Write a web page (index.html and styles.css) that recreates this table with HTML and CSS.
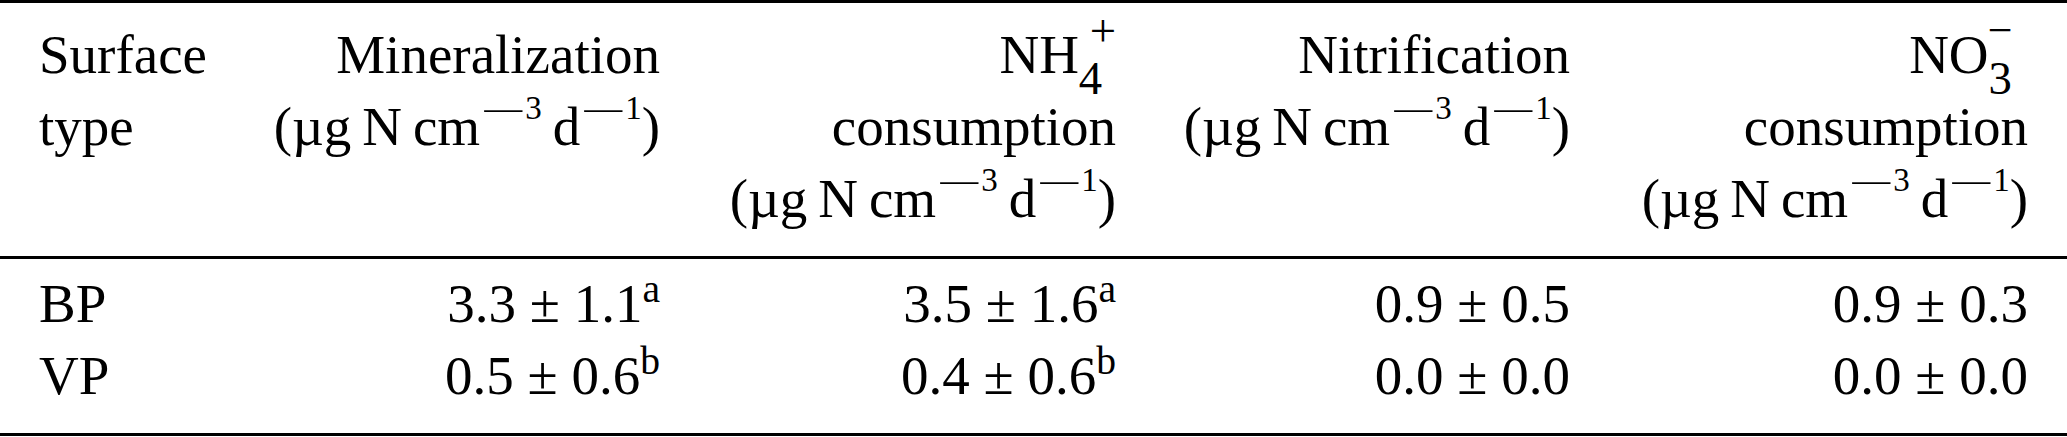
FILE: index.html
```html
<!DOCTYPE html>
<html lang="en">
<head>
    <meta charset="UTF-8">
    <title>Nitrogen transformation rates</title>
    <link rel="stylesheet" href="styles.css">
</head>
<body>
    <table class="rates">
        <colgroup>
            <col class="col-type">
            <col class="col-min">
            <col class="col-nh4">
            <col class="col-nit">
            <col class="col-no3">
        </colgroup>
        <thead>
            <tr>
                <th class="left">Surface<br>type</th>
                <th>Mineralization<br><span class="unit">(µg&#8201;N&#8201;cm<sup class="pow"><span class="neg">−</span>3</sup>&#8201;d<sup class="pow"><span class="neg">−</span>1</sup>)</span></th>
                <th>NH<sub class="idx">4</sub><sup class="chg">+</sup><br>consumption<br><span class="unit">(µg&#8201;N&#8201;cm<sup class="pow"><span class="neg">−</span>3</sup>&#8201;d<sup class="pow"><span class="neg">−</span>1</sup>)</span></th>
                <th>Nitrification<br><span class="unit">(µg&#8201;N&#8201;cm<sup class="pow"><span class="neg">−</span>3</sup>&#8201;d<sup class="pow"><span class="neg">−</span>1</sup>)</span></th>
                <th>NO<sub class="idx">3</sub><sup class="chg minus">−</sup><br>consumption<br><span class="unit">(µg&#8201;N&#8201;cm<sup class="pow"><span class="neg">−</span>3</sup>&#8201;d<sup class="pow"><span class="neg">−</span>1</sup>)</span></th>
            </tr>
        </thead>
        <tbody>
            <tr class="first">
                <td class="left">BP</td>
                <td>3.3 ± 1.1<sup class="note">a</sup></td>
                <td>3.5 ± 1.6<sup class="note">a</sup></td>
                <td>0.9 ± 0.5</td>
                <td>0.9 ± 0.3</td>
            </tr>
            <tr class="last">
                <td class="left">VP</td>
                <td>0.5 ± 0.6<sup class="note">b</sup></td>
                <td>0.4 ± 0.6<sup class="note">b</sup></td>
                <td>0.0 ± 0.0</td>
                <td>0.0 ± 0.0</td>
            </tr>
        </tbody>
    </table>
</body>
</html>
```

FILE: styles.css
```css
body {
    margin: 0;
    background: #fff;
    color: #000;
    font-family: "Liberation Serif", "Times New Roman", serif;
}

.rates {
    width: 2067px;
    table-layout: fixed;
    border-collapse: collapse;
    font-size: 55px;
    line-height: 72px;
    border-top: 3px solid #000;
    border-bottom: 3px solid #000;
}

.col-type { width: 250px; }
.col-min { width: 410px; }
.col-nh4 { width: 456px; }
.col-nit { width: 454px; }
.col-no3 { width: 497px; }

.rates th,
.rates td {
    padding: 0;
    text-align: right;
    vertical-align: top;
    font-weight: normal;
    white-space: nowrap;
}

.rates th {
    padding-top: 16px;
    padding-bottom: 21px;
    border-bottom: 3px solid #000;
}

.rates .left {
    text-align: left;
    padding-left: 39px;
}

.rates th:last-child,
.rates td:last-child {
    padding-right: 39px;
}

.rates tr.first td {
    padding-top: 9px;
}

.rates tr.last td {
    padding-bottom: 21px;
}

/* exponents in the units */
.pow {
    font-size: 0.6em;
    line-height: 0;
    vertical-align: 0.79em;
}

.neg {
    display: inline-block;
    transform: scaleX(2.5);
    margin: 0 0.38em 0 0.42em;
    vertical-align: -0.1em;
}

/* stacked index and charge of the ions */
.idx {
    font-size: 0.85em;
    line-height: 0;
    vertical-align: -0.44em;
}

.chg {
    font-size: 0.85em;
    line-height: 0;
    vertical-align: 0.58em;
    margin-left: -0.27em;
}

.chg.minus {
    font-size: 0.8em;
    vertical-align: 0.64em;
    margin-left: -0.55em;
    margin-right: 0.35em;
}

/* significance letters */
.note {
    font-size: 0.72em;
    line-height: 0;
    vertical-align: 0.5em;
}
```
